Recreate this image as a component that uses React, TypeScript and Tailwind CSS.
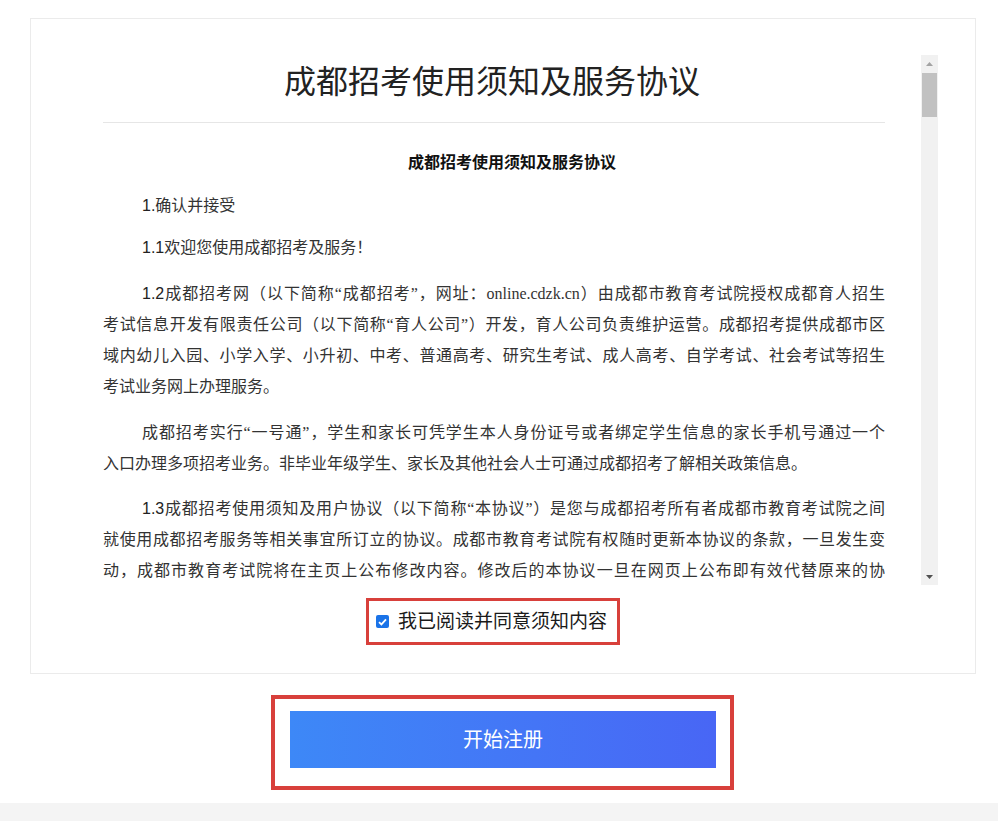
import React from "react";

const serif = "font-['Liberation_Serif','Noto_Sans_CJK_SC',serif]";
const sans = "font-['Liberation_Sans','Noto_Sans_CJK_SC',sans-serif]";

function Num({ children }: { children: React.ReactNode }) {
  return <span className={`${sans} text-[#222]`}>{children}</span>;
}

function JLine({ children, indent, last }: { children: React.ReactNode; indent?: boolean; last?: boolean }) {
  return (
    <div
      className={`h-[31px] leading-[31px] whitespace-nowrap ${indent ? "pl-[39px]" : ""} ${
        last ? "text-left" : "text-justify [text-align-last:justify]"
      }`}
    >
      {children}
    </div>
  );
}

export default function App() {
  return (
    <div className={`w-[998px] h-[821px] bg-white flex flex-col ${sans}`}>
      <div className="pt-[18px] pl-[30px] pr-[22px]">
        <div className="h-[656px] border border-[#ebebeb] bg-white flex flex-col">
          <div className="pt-[36px] pl-[72px] pr-[37px] flex gap-[36px]">
            <div className="w-[782px] h-[530px] overflow-hidden">
              <div className="mt-[7px] h-[40px] leading-[40px] text-center text-[32px] text-[#222] pr-[4px]">
                成都招考使用须知及服务协议
              </div>
              <div className="mt-[20px] h-px bg-[#e6e6e6]" />
              <div className="mt-[28px] pl-[36px] h-[24px] leading-[24px] text-center text-[16px] font-bold text-[#111]">
                成都招考使用须知及服务协议
              </div>
              <div className={`${serif} text-[16px] text-[#333]`}>
                <div className="mt-[15px]">
                  <JLine indent last>
                    <Num>1.</Num>确认并接受
                  </JLine>
                </div>
                <div className="mt-[11px]">
                  <JLine indent last>
                    <Num>1.1</Num>欢迎您使用成都招考及服务！
                  </JLine>
                </div>
                <div className="mt-[15px]">
                  <JLine indent>
                    <Num>1.2</Num>成都招考网（以下简称“成都招考”，网址：online.cdzk.cn）由成都市教育考试院授权成都育人招生
                  </JLine>
                  <JLine>考试信息开发有限责任公司（以下简称“育人公司”）开发，育人公司负责维护运营。成都招考提供成都市区</JLine>
                  <JLine>域内幼儿入园、小学入学、小升初、中考、普通高考、研究生考试、成人高考、自学考试、社会考试等招生</JLine>
                  <JLine last>考试业务网上办理服务。</JLine>
                </div>
                <div className="mt-[15px]">
                  <JLine indent>成都招考实行“一号通”，学生和家长可凭学生本人身份证号或者绑定学生信息的家长手机号通过一个</JLine>
                  <JLine last>入口办理多项招考业务。非毕业年级学生、家长及其他社会人士可通过成都招考了解相关政策信息。</JLine>
                </div>
                <div className="mt-[14px]">
                  <JLine indent>
                    <Num>1.3</Num>成都招考使用须知及用户协议（以下简称“本协议”）是您与成都招考所有者成都市教育考试院之间
                  </JLine>
                  <JLine>就使用成都招考服务等相关事宜所订立的协议。成都市教育考试院有权随时更新本协议的条款，一旦发生变</JLine>
                  <JLine>动，成都市教育考试院将在主页上公布修改内容。修改后的本协议一旦在网页上公布即有效代替原来的协</JLine>
                </div>
              </div>
            </div>
            {/* scrollbar */}
            <div className="w-[17px] h-[530px] bg-[#f1f1f1] flex flex-col items-center">
              <div className="h-[17px] w-full flex items-center justify-center">
                <svg width="7" height="4" viewBox="0 0 7 4">
                  <polygon points="0,4 7,4 3.5,0" fill="#a3a3a3" />
                </svg>
              </div>
              <div className="mt-px w-[15px] h-[44px] bg-[#c1c1c1]" />
              <div className="flex-1" />
              <div className="h-[17px] w-full flex items-center justify-center">
                <svg width="7" height="4" viewBox="0 0 7 4">
                  <polygon points="0,0 7,0 3.5,4" fill="#505050" />
                </svg>
              </div>
            </div>
          </div>
          <div className="mt-[13px] flex justify-center pr-[20px]">
            <div className="w-[254px] h-[47px] border-[3px] border-[#d8403b] flex items-center pl-[7px] gap-[9px]">
              <div className="w-[13px] h-[13px] rounded-[2px] bg-[#1a73e8] flex items-center justify-center">
                <svg width="9" height="8" viewBox="0 0 9 8">
                  <path d="M1 4.2 L3.4 6.4 L8 1.4" stroke="white" strokeWidth="1.8" fill="none" />
                </svg>
              </div>
              <span className="text-[19px] text-[#1a1a1a] leading-none">我已阅读并同意须知内容</span>
            </div>
          </div>
        </div>
      </div>
      <div className="mt-[21px] flex justify-center pl-[7px]">
        <div className="w-[463px] h-[95px] border-[4px] border-[#d8403b] pt-[12px] pl-[15px]">
          <div className="w-[426px] h-[57px] bg-gradient-to-r from-[#3d88f7] to-[#4866f5] flex items-center justify-center text-white text-[20px]">
            开始注册
          </div>
        </div>
      </div>
      <div className="mt-[13px] flex-1 bg-[#f4f4f4]" />
    </div>
  );
}
